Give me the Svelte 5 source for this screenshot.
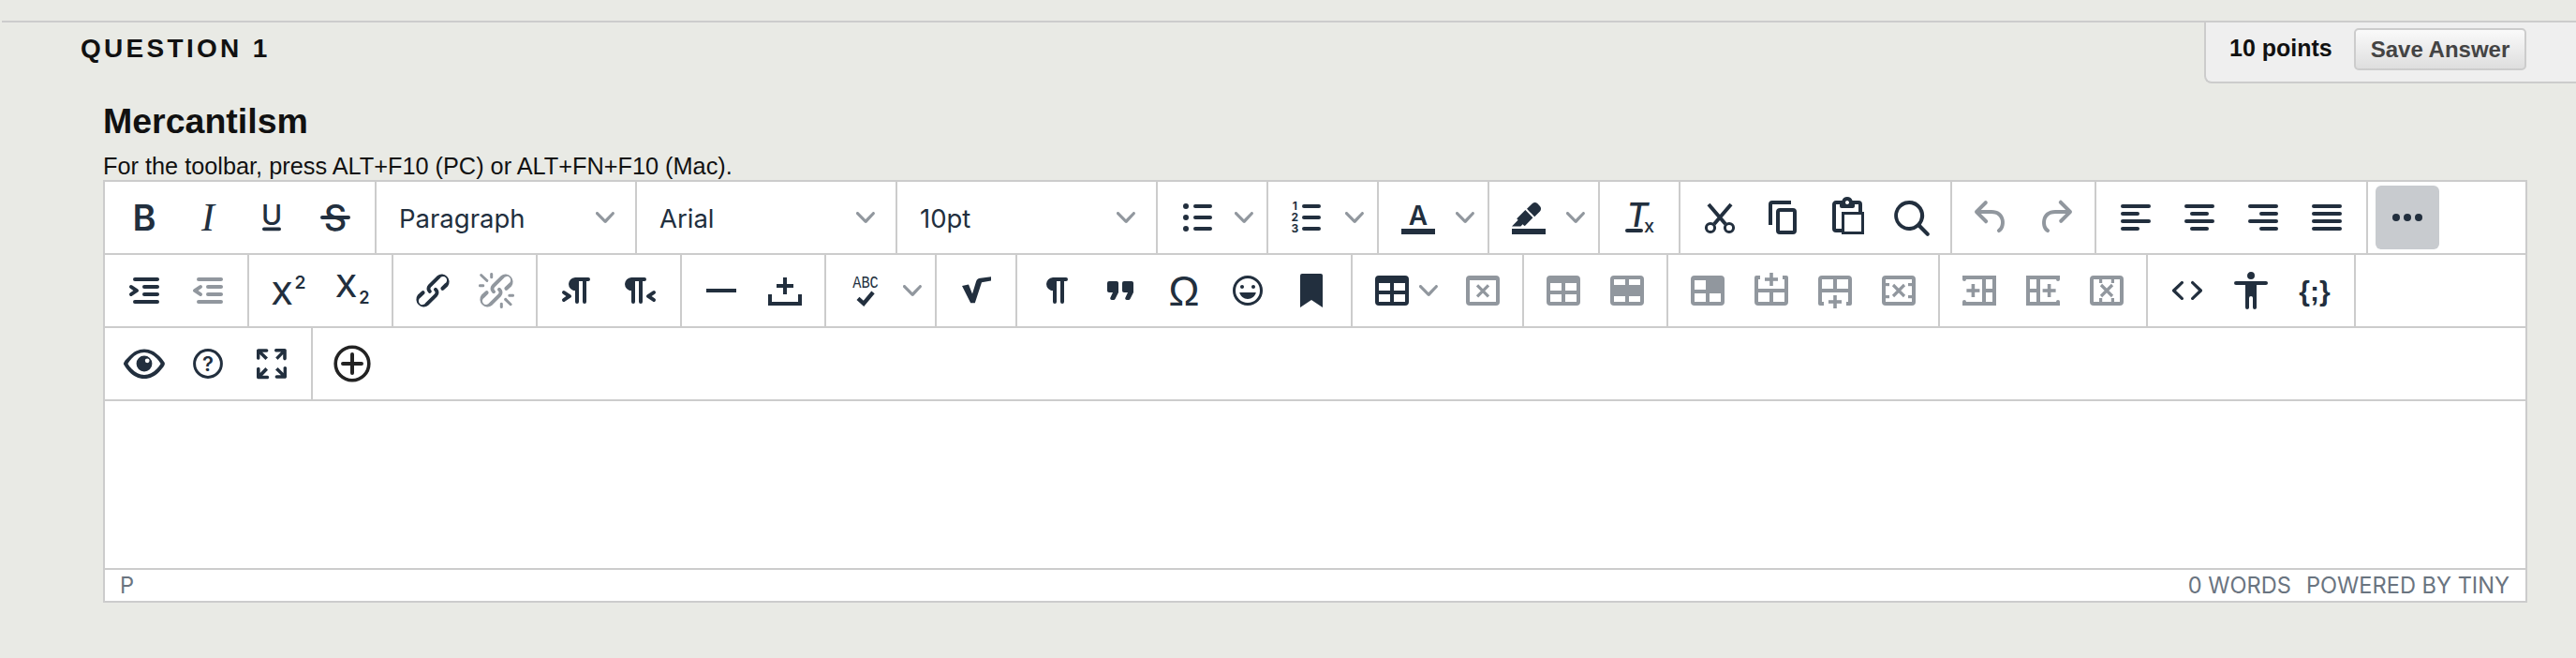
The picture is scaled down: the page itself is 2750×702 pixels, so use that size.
<script>
	// small helpers for the 24x24 toolbar icons
	const bar = (x, y, w, h = 2) => `<rect x="${x}" y="${y}" width="${w}" height="${h}" rx="${Math.min(h / 2, 1)}"/>`
	const block = (x, y, w, h) => `<rect x="${x}" y="${y}" width="${w}" height="${h}"/>`
	const label = (x, y, size, text, extra = '') =>
		`<text x="${x}" y="${y}" font-size="${size}" font-family="Inter, sans-serif" ${extra}>${text}</text>`
	const frame = 'M5 4h14a2 2 0 0 1 2 2v12a2 2 0 0 1-2 2H5a2 2 0 0 1-2-2V6a2 2 0 0 1 2-2z'
	const hole = (x, y, w, h) => `M${x} ${y}h${w}v${h}h-${w}z`
	const framed = (...holes) => `<path fill-rule="evenodd" d="${frame}${holes.map((h) => hole(...h)).join('')}"/>`
	const plus = (cx, cy, len = 7, t = 1.8) => block(cx - len / 2, cy - t / 2, len, t) + block(cx - t / 2, cy - len / 2, t, len)
	const cross = (cx, cy, r = 3) =>
		`<path fill="none" stroke="currentColor" stroke-width="1.6" d="M${cx - r} ${cy - r}l${2 * r} ${2 * r}m0 -${2 * r}l-${2 * r} ${2 * r}"/>`
	const pilcrow = 'M11 5h7a1 1 0 0 1 0 2h-1v11a1 1 0 0 1-2 0V7h-2v11a1 1 0 0 1-2 0v-6c-.5 0-1 0-1.4-.3A3.4 3.4 0 0 1 7.8 10a3.3 3.3 0 0 1 0-2.8 3.4 3.4 0 0 1 1.8-1.8L11 5z'

	const rowBefore = `<path fill-rule="evenodd" d="M3 5a1 1 0 0 1 1-1h2v2H5v5h14V6h-1V4h2a1 1 0 0 1 1 1v13a2 2 0 0 1-2 2H5a2 2 0 0 1-2-2z${hole(5, 13, 6, 5)}${hole(13, 13, 6, 5)}"/>` + plus(12, 6, 7)
	const colBefore = block(3, 4, 18, 2) + block(3, 18, 18, 2) + bar(19, 4, 2, 16) + block(13.5, 4, 2, 16) + block(15, 11, 5, 2) + bar(3, 4, 2, 3) + bar(3, 17, 2, 3) + plus(8.7, 12, 7)

	const icons = {
		bold: label(12, 19, 19, 'B', 'text-anchor="middle" font-weight="600"'),
		italic: `<text x="12" y="19" text-anchor="middle" font-size="21" font-style="italic" font-family="Liberation Serif, serif">I</text>`,
		underline: label(12, 16, 15, 'U', 'text-anchor="middle" font-weight="500"') + bar(7, 17.3, 10, 1.8),
		strike: label(12, 19, 19, 'S', 'text-anchor="middle" font-weight="500"') + bar(4, 11, 16),
		bullist: bar(10, 5, 10) + bar(10, 11, 10) + bar(10, 17, 10) + '<circle cx="6" cy="6" r="1.5"/><circle cx="6" cy="12" r="1.5"/><circle cx="6" cy="18" r="1.5"/>',
		numlist: bar(9, 5, 10) + bar(9, 11, 10) + bar(9, 17, 10) +
			label(5.2, 8, 6, '1', 'text-anchor="middle" font-weight="700"') +
			label(5.2, 14, 6, '2', 'text-anchor="middle" font-weight="700"') +
			label(5.2, 20, 6, '3', 'text-anchor="middle" font-weight="700"'),
		forecolor: block(3, 18, 18, 3) + label(12, 16, 14, 'A', 'text-anchor="middle" font-weight="600"'),
		backcolor: block(3, 18, 18, 3) + '<path d="M7.7 16.7H3l3.3-3.3-.7-.8L10.2 8l4 4.1-4 4.2c-.2.2-.6.2-.8 0l-.6-.7-1.1 1.1zm5-7.5L11 7.4l3-2.9a2 2 0 0 1 2.6 0L18 6c.7.7.7 2 0 2.7l-2.9 2.9-1.8-1.8-.5-.6"/>',
		removeformat: label(11, 17, 18, 'T', 'text-anchor="middle" font-style="italic" font-weight="500"') + bar(4.5, 18, 9.5) + label(14.5, 20, 10, 'x', 'font-weight="500"'),
		cut: '<g fill="none" stroke="currentColor"><path stroke-width="2" d="M6 5l9 10.500M18 5l-9 10.500"/><circle stroke-width="1.500" cx="7" cy="17.500" r="2.300"/><circle stroke-width="1.500" cx="17" cy="17.500" r="2.300"/></g>',
		copy: '<path d="M16 3H6a2 2 0 0 0-2 2v11h2V5h10V3zm1 4a2 2 0 0 1 2 2v10a2 2 0 0 1-2 2h-7a2 2 0 0 1-2-2V9c0-1.2.9-2 2-2h7zm0 12V9h-7v10h7z"/>',
		paste: '<path d="M18 9V5h-2v1c0 .6-.4 1-1 1H9a1 1 0 0 1-1-1V5H6v13h3V9h9zM9 20H6a2 2 0 0 1-2-2V5c0-1.1.9-2 2-2h3.2A3 3 0 0 1 12 1a3 3 0 0 1 2.8 2H18a2 2 0 0 1 2 2v4h1v12H9v-1zm1.5-9.5v9h9v-9h-9zM12 3a1 1 0 0 0-1 1c0 .5.4 1 1 1s1-.5 1-1-.4-1-1-1z"/>',
		search: '<path d="M16 17.3a8 8 0 1 1 1.4-1.4l4.3 4.4a1 1 0 0 1-1.4 1.4l-4.4-4.3zm-5-.3a6 6 0 1 0 0-12 6 6 0 0 0 0 12z"/>',
		undo: '<path d="M6.4 8H12c3.7 0 6.2 2 6.8 5.1.6 2.7-.4 5.6-2.3 6.8a1 1 0 0 1-1-1.8c1.1-.6 1.8-2.7 1.4-4.6-.5-2.1-2.1-3.5-4.9-3.5H6.4l3.3 3.3a1 1 0 1 1-1.4 1.4l-5-5a1 1 0 0 1 0-1.4l5-5a1 1 0 0 1 1.4 1.4L6.4 8z"/>',
		redo: '<path d="M17.6 10H12c-2.8 0-4.4 1.4-4.9 3.5-.4 2 .3 4 1.4 4.6a1 1 0 1 1-1 1.8c-2-1.2-2.9-4.1-2.3-6.8.6-3 3-5.1 6.8-5.1h5.6l-3.3-3.3a1 1 0 1 1 1.4-1.4l5 5a1 1 0 0 1 0 1.4l-5 5a1 1 0 0 1-1.4-1.4l3.3-3.3z"/>',
		alignleft: bar(4, 5, 16) + bar(4, 9, 10) + bar(4, 13, 16) + bar(4, 17, 10),
		aligncenter: bar(4, 5, 16) + bar(7, 9, 10) + bar(4, 13, 16) + bar(7, 17, 10),
		alignright: bar(4, 5, 16) + bar(10, 9, 10) + bar(4, 13, 16) + bar(10, 17, 10),
		alignjustify: bar(4, 5, 16) + bar(4, 9, 16) + bar(4, 13, 16) + bar(4, 17, 16),
		more: '<circle cx="6" cy="12" r="2"/><circle cx="12" cy="12" r="2"/><circle cx="18" cy="12" r="2"/>',
		indent: '<path fill-rule="evenodd" d="M7 5h12c.6 0 1 .4 1 1s-.4 1-1 1H7a1 1 0 1 1 0-2zm5 4h7c.6 0 1 .4 1 1s-.4 1-1 1h-7a1 1 0 0 1 0-2zm0 4h7c.6 0 1 .4 1 1s-.4 1-1 1h-7a1 1 0 0 1 0-2zm-5 4h12a1 1 0 0 1 0 2H7a1 1 0 0 1 0-2zm-2.6-3.8L6.2 12l-1.8-1.2a1 1 0 0 1 1.2-1.6l3 2a1 1 0 0 1 0 1.6l-3 2a1 1 0 1 1-1.2-1.6z"/>',
		outdent: '<path fill-rule="evenodd" d="M7 5h12c.6 0 1 .4 1 1s-.4 1-1 1H7a1 1 0 1 1 0-2zm5 4h7c.6 0 1 .4 1 1s-.4 1-1 1h-7a1 1 0 0 1 0-2zm0 4h7c.6 0 1 .4 1 1s-.4 1-1 1h-7a1 1 0 0 1 0-2zm-5 4h12a1 1 0 0 1 0 2H7a1 1 0 0 1 0-2zm1.6-3.8a1 1 0 0 1-1.2 1.6l-3-2a1 1 0 0 1 0-1.6l3-2a1 1 0 0 1 1.2 1.6L6.8 12l1.8 1.2z"/>',
		superscript: label(2.8, 19.5, 16.5, 'X', 'font-weight="500"') + label(15.3, 11, 9.6, '2', 'font-weight="600"'),
		subscript: label(3, 15.5, 16.5, 'X', 'font-weight="500"') + label(15.6, 18.8, 9, '2', 'font-weight="600"'),
		link: '<path d="M6.2 12.3a1 1 0 0 1 1.4 1.4l-2.1 2.1a2 2 0 1 0 2.7 2.7l4.8-4.8a1 1 0 0 0 0-1.4 1 1 0 1 1 1.4-1.3 2.9 2.9 0 0 1 0 4.1l-4.8 4.8a4 4 0 0 1-5.6-5.6l2.2-2zm11.6-.6a1 1 0 0 1-1.4-1.4l2-2a2 2 0 1 0-2.6-2.8L11 10.2a1 1 0 0 0 0 1.4A1 1 0 1 1 9.6 13a2.9 2.9 0 0 1 0-4.1l4.8-4.8a4 4 0 0 1 5.6 5.6l-2.2 2z"/>',
		unlink: '<path d="M6.2 12.3a1 1 0 0 1 1.4 1.4l-2 2a2 2 0 1 0 2.6 2.8l4.8-4.8a1 1 0 0 0 0-1.4 1 1 0 1 1 1.4-1.3 2.9 2.9 0 0 1 0 4.1l-4.8 4.8a4 4 0 0 1-5.6-5.6l2.2-2zm11.6-.6a1 1 0 0 1-1.4-1.4l2.1-2.1a2 2 0 1 0-2.7-2.7L11 10.3a1 1 0 0 0 0 1.4 1 1 0 1 1-1.4 1.3 2.9 2.9 0 0 1 0-4.1l4.8-4.8a4 4 0 0 1 5.6 5.6l-2.2 2zM7.6 6.3a.8.8 0 0 1-1 1.1L3.3 4.2a.7.7 0 1 1 1-1l3.2 3.1zM5.1 8.6a.8.8 0 0 1 0 1.5H3a.8.8 0 0 1 0-1.5H5zm5-3.5a.8.8 0 0 1-1.5 0V3a.8.8 0 0 1 1.5 0V5zm6 11.8a.8.8 0 0 1 1-1l3.2 3.2a.8.8 0 0 1-1 1L16 17zm-2.2 2a.8.8 0 0 1 1.5 0V21a.8.8 0 0 1-1.5 0V19zm5-3.5a.7.7 0 1 1 0-1.5H21a.8.8 0 0 1 0 1.5H19z"/>',
		ltr: `<path d="${pilcrow}"/><path d="M4.4 16.2L6.2 15l-1.8-1.2a1 1 0 0 1 1.2-1.6l3 2a1 1 0 0 1 0 1.6l-3 2a1 1 0 1 1-1.2-1.6z"/>`,
		rtl: `<path transform="translate(-4 0)" d="${pilcrow}"/><path d="M19.6 16.2L17.8 15l1.8-1.2a1 1 0 0 0-1.2-1.6l-3 2a1 1 0 0 0 0 1.6l3 2a1 1 0 1 0 1.2-1.6z"/>`,
		hr: block(4, 11, 16, 2),
		pagebreak: plus(12, 9.5, 9, 2) + '<path d="M3 14h2v4h14v-4h2v6H3z"/>',
		spellcheck: `<text transform="translate(12 10.5) scale(.85 1)" text-anchor="middle" font-size="9" font-family="Liberation Mono, monospace">ABC</text>` +
			'<path fill="none" stroke="currentColor" stroke-width="2.2" d="M8 16.2l3 2.700 5-6"/>',
		equation: '<path d="M4.5 9.5l3.5-.8 2 5 2-6.500c.4-1.200 1.200-1.700 2.300-1.800l5.700-.8v2.200l-5 .8-3.600 11H9.100z"/>',
		visualchars: `<path transform="translate(-1 0)" d="${pilcrow}"/>`,
		quotes: '<path d="M7.5 17h.9c.4 0 .7-.2.9-.6L11 13V8c0-.6-.4-1-1-1H6a1 1 0 0 0-1 1v4c0 .6.4 1 1 1h2l-1.3 2.7a1 1 0 0 0 .8 1.3zm8 0h.9c.4 0 .7-.2.9-.6L19 13V8c0-.6-.4-1-1-1h-4a1 1 0 0 0-1 1v4c0 .6.4 1 1 1h2l-1.3 2.7a1 1 0 0 0 .8 1.3z"/>',
		charmap: `<text x="12" y="20" text-anchor="middle" font-size="22" font-family="Liberation Sans, sans-serif">Ω</text>`,
		emoji: '<path d="M9 11c.6 0 1-.4 1-1s-.4-1-1-1-1 .4-1 1 .4 1 1 1zm6 0c.6 0 1-.4 1-1s-.4-1-1-1-1 .4-1 1 .4 1 1 1zm-3 5.5c2.1 0 4-1.5 4.4-3.5H7.6c.5 2 2.3 3.5 4.4 3.5zM12 4a8 8 0 1 0 0 16 8 8 0 0 0 0-16zm0 14.5a6.5 6.5 0 1 1 0-13 6.5 6.5 0 0 1 0 13z"/>',
		bookmark: '<path d="M6 4v17l6-4 6 4V4c0-.6-.4-1-1-1H7a1 1 0 0 0-1 1z"/>',
		table: framed([5, 8, 6, 4], [13, 8, 6, 4], [5, 14, 6, 4], [13, 14, 6, 4]),
		tabledelete: framed([5, 6.5, 14, 11.5]) + cross(12, 12.2),
		cellprops: framed([5, 8, 6, 4], [13, 8, 6, 4], [5, 14, 6, 4], [13, 14, 6, 4]),
		merge: framed([5, 6, 6, 3], [13, 6, 6, 3], [5, 15, 6, 3], [13, 15, 6, 3]),
		split: framed([5, 6.5, 6, 5], [5, 13.5, 6, 4.5], [13, 13.5, 6, 4.5]),
		rowbefore: rowBefore,
		rowafter: `<g transform="matrix(1 0 0 -1 0 24)">${rowBefore}</g>`,
		rowdelete: framed([5, 6, 14, 12]) + cross(12, 12) + block(5, 8, 2, 1.6) + block(5, 14.5, 2, 1.6) + block(17, 8, 2, 1.6) + block(17, 14.5, 2, 1.6),
		colbefore: colBefore,
		colafter: `<g transform="matrix(-1 0 0 1 24 0)">${colBefore}</g>`,
		coldelete: framed([5, 6, 14, 12]) + cross(12, 12) + block(8, 6, 1.6, 2) + block(14.4, 6, 1.6, 2) + block(8, 16, 1.6, 2) + block(14.4, 16, 1.6, 2),
		code: '<path d="M9.8 15.7c.3.3.3.8 0 1-.3.4-.9.4-1.2 0l-4.4-4.1a.8.8 0 0 1 0-1.2l4.4-4.2c.3-.3.9-.3 1.2 0 .3.3.3.8 0 1.1L6 12l3.8 3.7zM14.2 15.7c-.3.3-.3.8 0 1 .4.4.9.4 1.2 0l4.4-4.1c.3-.3.3-.9 0-1.2l-4.4-4.2a.8.8 0 0 0-1.2 0c-.3.3-.3.8 0 1.1L18 12l-3.8 3.7z"/>',
		a11y: '<path d="M12 2a2 2 0 0 1 2 2 2 2 0 0 1-2 2 2 2 0 0 1-2-2c0-1.1.9-2 2-2zm8 7h-5v12c0 .6-.4 1-1 1a1 1 0 0 1-1-1v-5c0-.6-.4-1-1-1a1 1 0 0 0-1 1v5c0 .6-.4 1-1 1a1 1 0 0 1-1-1V9H4a1 1 0 1 1 0-2h16c.6 0 1 .4 1 1s-.4 1-1 1z"/>',
		template: `<text x="12" y="17.5" text-anchor="middle" font-size="15" font-weight="700" font-family="Liberation Sans, sans-serif">{;}</text>`,
		preview: '<path fill-rule="evenodd" d="M12 4.2c3.1 0 5.8 1.4 8.1 3.8a18.2 18.2 0 0 1 2.8 3.5v1l-.7 1.2-2.1 2.5c-2.3 2.4-5 3.8-8.1 3.8s-5.800-1.400-8.100-3.800a18.2 18.2 0 0 1-2.800-3.700 1 1 0 0 1 0-1l.7-1.200L4 8C6.200 5.600 8.900 4.200 12 4.200zm0 1.800a9.300 9.300 0 0 0-6.700 3.200A16.200 16.200 0 0 0 3.200 12c.5.9 1.200 1.900 2.100 2.800 2 2 4.200 3.200 6.700 3.200s4.700-1.200 6.700-3.200a16.200 16.200 0 0 0 2.100-2.800 15.700 15.700 0 0 0-2.100-2.800C16.700 7.200 14.500 6 12 6z"/><path fill-rule="evenodd" d="M12 7.800a4.200 4.200 0 1 1 0 8.400 4.200 4.200 0 0 1 0-8.400zm1.600 1.400a1.200 1.200 0 1 0 0 2.400 1.200 1.200 0 0 0 0-2.400z"/>',
		help: '<circle cx="12" cy="12" r="7.200" fill="none" stroke="currentColor" stroke-width="1.500"/>' + label(12, 16, 11, '?', 'text-anchor="middle" font-weight="600"'),
		fullscreen: '<path d="M15.3 10l-1.2-1.3 2.9-3h-2.3a.9.9 0 1 1 0-1.7H19c.5 0 .9.4.9.9v4.4a.9.9 0 1 1-1.8 0V7l-2.9 3zm0 4l3 3v-2.3a.9.9 0 1 1 1.7 0V19c0 .5-.4.9-.9.9h-4.4a.9.9 0 1 1 0-1.8H17l-3-2.9 1.3-1.2zM10 15.4l-2.9 3h2.3a.9.9 0 1 1 0 1.7H5a.9.9 0 0 1-1-.9v-4.4a.9.9 0 1 1 1.8 0V17l2.9-3 1.2 1.3zM8.7 10L5.7 7v2.3a.9.9 0 0 1-1.7 0V5c0-.5.4-.9.9-.9h4.4a.9.9 0 0 1 0 1.8H7l3 2.9-1.3 1.2z"/>',
		addcircle: '<circle cx="12" cy="12" r="8.900" fill="none" stroke="#222" stroke-width="1.800"/><path fill="none" stroke="#222" stroke-width="2" stroke-linecap="round" d="M7 12h10M12 7v10"/>'
	}

	// off = disabled icon, split = has a dropdown arrow, sel = font select
	const toolbar = [
		[
			[{ i: 'bold' }, { i: 'italic' }, { i: 'underline' }, { i: 'strike' }],
			[{ sel: 'Paragraph' }],
			[{ sel: 'Arial' }],
			[{ sel: '10pt' }],
			[{ i: 'bullist', split: true }],
			[{ i: 'numlist', split: true }],
			[{ i: 'forecolor', split: true }],
			[{ i: 'backcolor', split: true }],
			[{ i: 'removeformat' }],
			[{ i: 'cut' }, { i: 'copy' }, { i: 'paste' }, { i: 'search' }],
			[{ i: 'undo', off: true }, { i: 'redo', off: true }],
			[{ i: 'alignleft' }, { i: 'aligncenter' }, { i: 'alignright' }, { i: 'alignjustify' }],
			[{ i: 'more', active: true }]
		],
		[
			[{ i: 'indent' }, { i: 'outdent', off: true }],
			[{ i: 'superscript' }, { i: 'subscript' }],
			[{ i: 'link' }, { i: 'unlink', off: true }],
			[{ i: 'ltr' }, { i: 'rtl' }],
			[{ i: 'hr' }, { i: 'pagebreak' }],
			[{ i: 'spellcheck', split: true }],
			[{ i: 'equation' }],
			[{ i: 'visualchars' }, { i: 'quotes' }, { i: 'charmap' }, { i: 'emoji' }, { i: 'bookmark' }],
			[{ i: 'table', split: true, narrow: true }, { i: 'tabledelete', off: true }],
			[{ i: 'cellprops', off: true }, { i: 'merge', off: true }],
			[{ i: 'split', off: true }, { i: 'rowbefore', off: true }, { i: 'rowafter', off: true }, { i: 'rowdelete', off: true }],
			[{ i: 'colbefore', off: true }, { i: 'colafter', off: true }, { i: 'coldelete', off: true }],
			[{ i: 'code' }, { i: 'a11y' }, { i: 'template' }]
		],
		[
			[{ i: 'preview' }, { i: 'help' }, { i: 'fullscreen' }],
			[{ i: 'addcircle' }]
		]
	]
</script>

{#snippet chevron()}
	<svg class="chev" viewBox="0 0 10 10" width="20" height="20">
		<path d="M8.7 2.2c.3-.3.8-.3 1 0 .4.4.4.9 0 1.2L5.7 7.8c-.3.3-.9.3-1.2 0L.2 3.4a.8.8 0 0 1 0-1.2c.3-.3.8-.3 1.1 0L5 6l3.7-3.8z" />
	</svg>
{/snippet}

<div class="page">
	<header class="questionHead">
		<h3>QUESTION 1</h3>
		<div class="points">
			<span>10 points</span>
			<button type="button" class="save">Save Answer</button>
		</div>
	</header>

	<main class="question">
		<h2>Mercantilsm</h2>
		<p>For the toolbar, press ALT+F10 (PC) or ALT+FN+F10 (Mac).</p>

		<div class="editor">
			{#each toolbar as row}
				<div class="tbRow">
					{#each row as group}
						<div class="tbGroup">
							{#each group as item}
								{#if item.sel}
									<div class="select">
										<span>{item.sel}</span>
										{@render chevron()}
									</div>
								{:else}
									<div class="btn" class:off={item.off} class:active={item.active} class:narrow={item.narrow}>
										<svg class="icon" viewBox="0 0 24 24" width="48" height="48">{@html icons[item.i]}</svg>
										{#if item.split}
											<span class="caret">{@render chevron()}</span>
										{/if}
									</div>
								{/if}
							{/each}
						</div>
					{/each}
				</div>
			{/each}
			<div class="editArea"></div>
			<div class="status">
				<span>P</span>
				<span class="statusRight"><span>0 WORDS</span><span>POWERED BY TINY</span></span>
			</div>
		</div>
	</main>
</div>

<style>
	:global(body) {
		background: #e9eae5;
	}
	.page {
		width: 2750px;
		height: 702px;
		padding-top: 22px;
		box-sizing: border-box;
		font-family: "Liberation Sans", Arial, sans-serif;
		overflow: hidden;
	}
	.questionHead {
		display: flex;
		justify-content: space-between;
		margin-left: 2px;
		border-top: 2px solid #ccc;
		height: 66px;
		padding-left: 84px;
	}
	h3 {
		margin: 12px 0 0;
		font-size: 28px;
		line-height: 32px;
		letter-spacing: 3.3px;
		font-weight: bold;
		color: #111;
	}
	.points {
		display: flex;
		align-items: flex-start;
		box-sizing: border-box;
		width: 397px;
		height: 65px;
		padding: 6px 53px 0 25px;
		background: #efefef;
		border-left: 2px solid #ccc;
		border-bottom: 2px solid #ccc;
		border-bottom-left-radius: 8px;
		font-size: 25px;
		font-weight: bold;
		color: #111;
	}
	.points span {
		margin-top: 6px;
		line-height: 30px;
		flex: 1;
	}
	.save {
		width: 184px;
		height: 45px;
		padding: 0;
		background: linear-gradient(#fafafa, #dedede);
		border: 2px solid #ccc;
		border-radius: 5px;
		font-family: inherit;
		font-size: 24px;
		font-weight: bold;
		color: #444;
	}
	.question {
		padding: 17px 52px 0 110px;
	}
	h2 {
		margin: 0;
		font-size: 37.5px;
		line-height: 44px;
		font-weight: bold;
		color: #111;
	}
	p {
		margin: 11px 0 0;
		font-size: 25.3px;
		line-height: 30px;
		color: #111;
	}
	.editor {
		border: 2px solid #ccc;
		background: #fff;
		color: #222f3e;
		font-family: Inter, sans-serif;
	}
	.tbRow {
		display: flex;
		height: 76px;
		border-bottom: 2px solid #ccc;
	}
	.tbGroup {
		display: flex;
		align-items: center;
		padding: 0 8px;
		border-right: 2px solid #ccc;
	}
	.tbRow:not(:nth-child(2)) .tbGroup:last-child {
		border-right: none;
	}
	.btn {
		display: flex;
		align-items: center;
		height: 68px;
		border-radius: 6px;
		fill: currentColor;
	}
	.icon {
		display: block;
		margin: 0 10px;
	}
	.off {
		color: #91979e;
	}
	.active {
		background: #c8cbcf;
	}
	.caret {
		display: flex;
		justify-content: center;
		width: 32px;
	}
	.narrow .caret {
		width: 28px;
		margin: 0 10px 0 -9px;
	}
	.chev {
		display: block;
		fill: #91979e;
	}
	.select {
		display: flex;
		align-items: center;
		justify-content: space-between;
		box-sizing: border-box;
		width: 260px;
		height: 68px;
		padding: 2px 14px 0 16px;
		font-size: 27.5px;
	}
	.select .chev {
		margin-top: -2px;
	}
	.editArea {
		height: 178px;
	}
	.status {
		display: flex;
		justify-content: space-between;
		align-items: center;
		height: 33px;
		padding: 0 17px 0 16px;
		border-top: 2px solid #ccc;
		font-size: 23.6px;
		color: #6a7480;
	}
	.statusRight {
		display: flex;
		gap: 16px;
	}
</style>
